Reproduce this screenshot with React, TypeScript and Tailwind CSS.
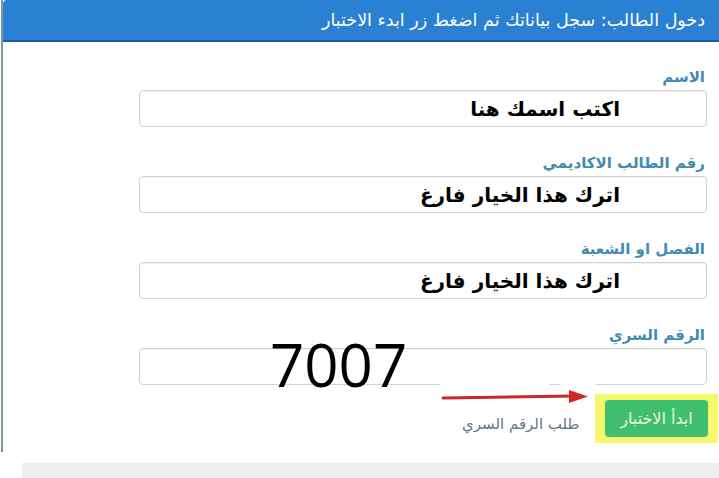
import React from 'react';

const fields = [
    { label: 'الاسم', value: 'اكتب اسمك هنا' },
    { label: 'رقم الطالب الاكاديمي', value: 'اترك هذا الخيار فارغ' },
    { label: 'الفصل او الشعبة', value: 'اترك هذا الخيار فارغ' },
    { label: 'الرقم السري', value: '' },
];

function Arrow() {
    return (
        <svg width="150" height="16" viewBox="0 0 150 16" className="block">
            <path d="M2 9 L132 7" stroke="#c8262a" strokeWidth="3" strokeLinecap="round" fill="none" />
            <path d="M128 1 L147 7.5 L128 14 Z" fill="#d4262a" />
        </svg>
    );
}

export default function App() {
    return (
        <div className="w-[719px] h-[478px] bg-white relative overflow-hidden" style={{ fontFamily: '"DejaVu Sans", "Noto Sans", sans-serif' }}>
            <div className="ml-[1px] h-[452px] border-l-2 border-[#7a9aa0] flex flex-col">
                {/* Header */}
                <div dir="rtl" className="h-[42px] bg-[#2a80d2] border-b-2 border-[#1c5e98] flex items-center pr-[14px] rounded-tl-[4px]">
                    <span className="text-white text-[17.5px] tracking-tight">دخول الطالب: سجل بياناتك ثم اضغط زر ابدء الاختبار</span>
                </div>

                {/* Form */}
                <div dir="rtl" className="flex flex-col gap-[27px] pt-[26px] pr-[12px] pl-[136px]">
                    {fields.map((f) => (
                        <div key={f.label} className="flex flex-col">
                            <label className="text-[15px] leading-[19px] font-bold text-[#3f8bb3] pr-[2px] mb-[3px]">{f.label}</label>
                            <div className="h-[37px] rounded-[4px] border border-[#cfd3d6] bg-white flex items-center pr-[86px] shadow-[inset_0_1px_1px_rgba(0,0,0,0.05)]">
                                <span className="text-[20px] font-bold text-black">{f.value}</span>
                            </div>
                        </div>
                    ))}
                </div>

                {/* Actions */}
                <div dir="rtl" className="flex items-center gap-[4px] mt-[9px] pr-[1px]">
                    <div className="bg-[#f4f86a] px-[10px] py-[6px]">
                        <button className="h-[37px] w-[103px] rounded-[4px] bg-[#3fbf6f] text-[#f3f7c8] text-[16px]">ابدأ الاختبار</button>
                    </div>
                    <div className="flex flex-col items-start">
                        <div className="-mt-[30px]">
                            <Arrow />
                        </div>
                    </div>
                </div>
            </div>

            {/* Link under arrow */}
            <span dir="rtl" className="absolute left-[462px] top-[413px] text-[15px] text-[#5b7b8b]">طلب الرقم السري</span>

            {/* Number written over the password field */}
            <span className="absolute left-[270px] top-[326px] text-[60px] leading-[76px] text-black" style={{ fontFamily: '"Open Sans", sans-serif' }}>7007</span>

            {/* Erased patches */}
            <div className="absolute left-[440px] top-[376px] w-[110px] h-[12px] bg-white rounded-full" />
            <div className="absolute left-[560px] top-[378px] w-[36px] h-[10px] bg-white rounded-full" />

            {/* Bottom bar */}
            <div className="absolute left-[22px] right-0 top-[463px] h-[15px] bg-[#eeeeee]" />
        </div>
    );
}
